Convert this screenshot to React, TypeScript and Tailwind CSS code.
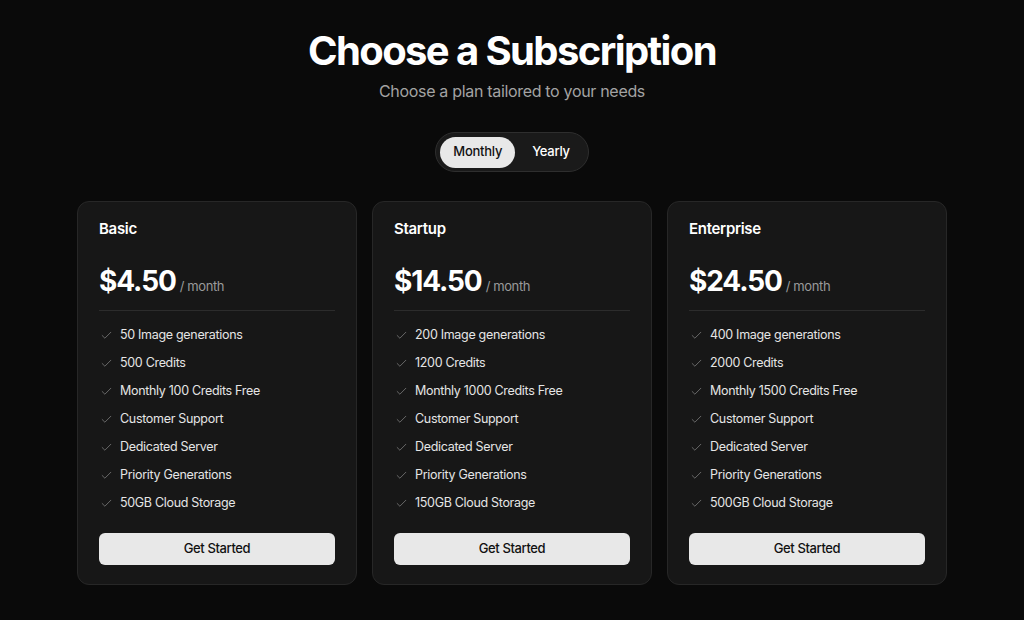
import React from "react";
import { Check } from "lucide-react";

const plans = [
  {
    name: "Basic",
    price: "$4.50",
    features: [
      "50 Image generations",
      "500 Credits",
      "Monthly 100 Credits Free",
      "Customer Support",
      "Dedicated Server",
      "Priority Generations",
      "50GB Cloud Storage",
    ],
  },
  {
    name: "Startup",
    price: "$14.50",
    features: [
      "200 Image generations",
      "1200 Credits",
      "Monthly 1000 Credits Free",
      "Customer Support",
      "Dedicated Server",
      "Priority Generations",
      "150GB Cloud Storage",
    ],
  },
  {
    name: "Enterprise",
    price: "$24.50",
    features: [
      "400 Image generations",
      "2000 Credits",
      "Monthly 1500 Credits Free",
      "Customer Support",
      "Dedicated Server",
      "Priority Generations",
      "500GB Cloud Storage",
    ],
  },
];

export default function App() {
  return (
    <div
      className="w-full min-h-[620px] bg-[#0a0a0a] text-white flex flex-col items-center pt-[27px]"
      style={{ fontFamily: "Inter, 'Liberation Sans', sans-serif" }}
    >
      <h1 className="text-[40px] leading-[48px] font-bold tracking-[-0.04em]">
        Choose a Subscription
      </h1>
      <p className="mt-1 text-base leading-6 text-[#a3a3a3] tracking-[-0.02em]">
        Choose a plan tailored to your needs
      </p>
      <div className="mt-[29px] h-10 flex items-center rounded-full bg-[#1a1a1a] border border-[#2e2e2e] px-[4px] gap-[3px]">
        <button className="h-[31px] px-[13px] rounded-full bg-[#e8e8e8] text-[#111] text-[13px] font-medium tracking-[-0.02em]">
          Monthly
        </button>
        <button className="h-[31px] px-[14px] rounded-full text-white text-[13px] font-medium tracking-[-0.02em]">
          Yearly
        </button>
      </div>
      <div className="mt-[29px] flex gap-[15px]">
        {plans.map((p) => (
          <div
            key={p.name}
            className="w-[280px] h-[384px] rounded-xl bg-[#171717] border border-[#272727] px-[21px] pt-[17px] flex flex-col"
          >
            <div className="text-[15px] leading-5 font-semibold tracking-[-0.02em]">{p.name}</div>
            <div className="mt-6 flex items-baseline gap-[4px] h-9">
              <span className="text-[28px] leading-9 font-bold tracking-[-0.04em]">{p.price}</span>
              <span className="text-[13px] text-[#9a9a9a] tracking-[-0.03em]">/ month</span>
            </div>
            <div className="mt-[11px] h-px bg-[#2c2c2c]" />
            <ul className="mt-[14px] flex flex-col gap-2">
              {p.features.map((f) => (
                <li key={f} className="flex items-center h-5 text-[12.5px] text-[#e5e5e5] tracking-[-0.025em]">
                  <Check size={13} strokeWidth={1.5} className="text-[#7a7a7a] ml-[1px] mr-[7px]" />
                  {f}
                </li>
              ))}
            </ul>
            <button className="mt-5 h-8 w-full rounded-md bg-[#e8e8e8] text-[#111] text-[13px] font-medium tracking-[-0.03em]">
              Get Started
            </button>
          </div>
        ))}
      </div>
    </div>
  );
}
